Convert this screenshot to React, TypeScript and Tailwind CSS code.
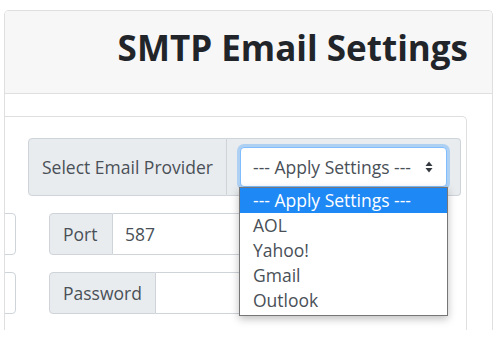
import React from "react";

function Arrows() {
  return (
    <svg width="8" height="12" viewBox="0 0 8 12" className="block">
      <path d="M4 0.5 L7.5 5 L0.5 5 Z" fill="#343a40" />
      <path d="M4 11.5 L7.5 7 L0.5 7 Z" fill="#343a40" />
    </svg>
  );
}

export default function App() {
  const items = ["AOL", "Yahoo!", "Gmail", "Outlook"];
  return (
    <div className="relative w-[501px] h-[351px] overflow-hidden bg-white font-['Open_Sans',sans-serif] text-[#495057]">
      <div className="ml-[4px] mt-[10px] w-[489px] h-[320px] border border-b-0 border-[#dfdfdf] rounded-t-[5px] overflow-hidden">
        <div className="h-[83px] bg-[#f7f7f7] border-b border-[#dfdfdf] flex items-center justify-end pr-[24px] pb-[10px]">
          <h1 className="text-[35px] font-bold text-[#212529] leading-none">SMTP Email Settings</h1>
        </div>
        <div className="pt-[22px]">
          <div className="-ml-[30px] w-[492px] h-[215px] border border-b-0 border-[#dfdfdf] rounded-t-[5px] pt-[21px]">
            {/* Row 1 */}
            <div className="ml-[52px] w-[433px] h-[58px] flex">
              <div className="w-[199px] h-full bg-[#e9ecef] border border-[#ced4da] rounded-l-[4px] flex items-center pl-[13px] text-[17.5px]">
                Select Email Provider
              </div>
              <div className="flex-1 h-full bg-[#e9ecef] border border-l-0 border-[#ced4da] rounded-r-[4px] pl-[13px] pt-[8px]">
                <div className="w-[207px] h-[40px] bg-white border border-[#80bdff] rounded-[4px] shadow-[0_0_0_3px_rgba(0,123,255,0.25)] flex items-center pl-[12px] pr-[13px] text-[17.5px]">
                  <span className="flex-1 whitespace-nowrap">--- Apply Settings ---</span>
                  <Arrows />
                </div>
              </div>
            </div>
            {/* Row 2 */}
            <div className="mt-[17px] flex gap-[33px] h-[42px]">
              <div className="w-[40px] h-full border border-[#ced4da] rounded-r-[4px] bg-white" />
              <div className="w-[391px] h-full flex">
                <div className="w-[64px] h-full bg-[#e9ecef] border border-[#ced4da] rounded-l-[4px] flex items-center pl-[13px] text-[17.5px]">
                  Port
                </div>
                <div className="flex-1 h-full bg-white border border-l-0 border-[#ced4da] rounded-r-[4px] flex items-center pl-[12px] text-[17.5px]">
                  587
                </div>
              </div>
            </div>
            {/* Row 3 */}
            <div className="mt-[17px] flex gap-[33px] h-[42px]">
              <div className="w-[40px] h-full border border-[#ced4da] rounded-r-[4px] bg-white" />
              <div className="w-[391px] h-full flex">
                <div className="w-[107px] h-full bg-[#e9ecef] border border-[#ced4da] rounded-l-[4px] flex items-center pl-[13px] text-[17.5px]">
                  Password
                </div>
                <div className="flex-1 h-full bg-white border border-l-0 border-[#ced4da] rounded-r-[4px]" />
              </div>
            </div>
          </div>
        </div>
      </div>
      {/* Dropdown list */}
      <div className="absolute left-[239px] top-[187px] w-[209px] h-[129px] bg-white border border-[#767676] shadow-[0_3px_8px_rgba(0,0,0,0.25)] text-[17.5px] leading-[25px]">
        <div className="h-[25px] bg-[#1e88f5] text-white pl-[13px] whitespace-nowrap">--- Apply Settings ---</div>
        {items.map((it) => (
          <div key={it} className="h-[25px] pl-[13px] text-[#495057]">
            {it}
          </div>
        ))}
      </div>
    </div>
  );
}
